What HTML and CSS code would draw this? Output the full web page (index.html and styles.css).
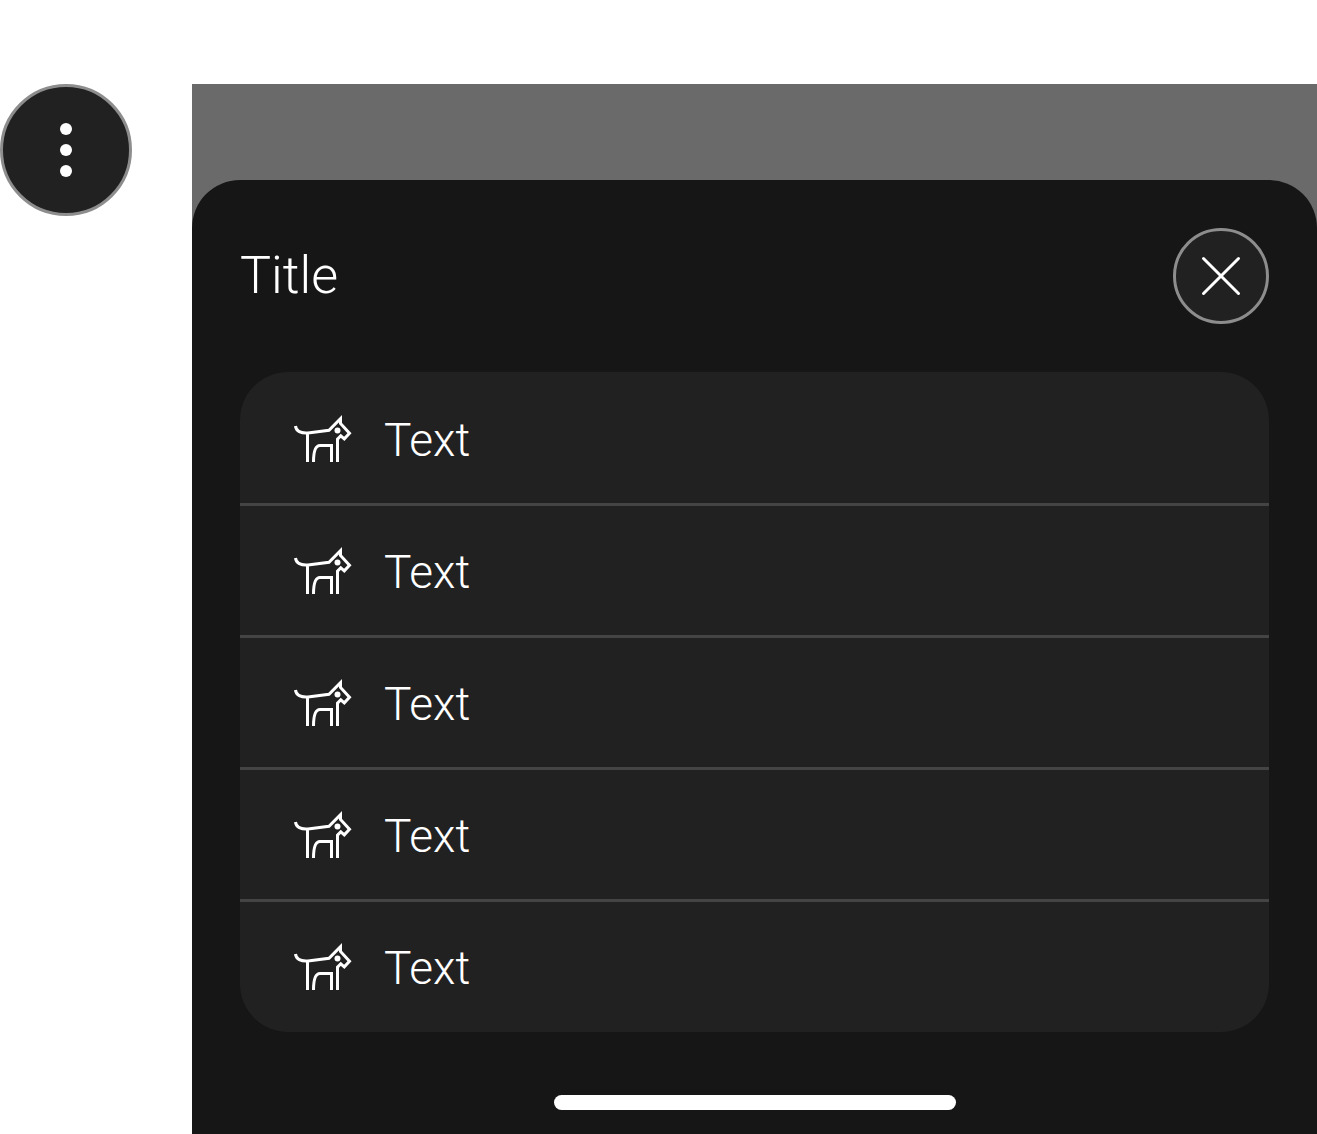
FILE: index.html
```html
<!DOCTYPE html>
<html lang="en">
<head>
<meta charset="utf-8">
<meta name="viewport" content="width=device-width, initial-scale=1">
<title>Title</title>
<link rel="stylesheet" href="styles.css">
</head>
<body>
<svg class="sprite" aria-hidden="true">
  <symbol id="dog" viewBox="0 0 72 72">
    <path d="M7.5 24C8 29 13 31.5 20 31L41 28.3 52.5 16.6V21.5L61.5 31.2 56.3 36.8 52.8 33.8 49.5 37.2V60M19.5 31V60M25.5 60C25.5 50 27 43.5 32 43.5H43.5V60" fill="none" stroke="currentColor" stroke-width="3"/>
    <circle cx="49.5" cy="28.5" r="3" fill="currentColor"/>
  </symbol>
</svg>
<div class="page">
  <button class="round more" type="button" aria-label="More">
    <svg class="more-icon" viewBox="0 0 72 72" aria-hidden="true"><circle cx="36" cy="15" r="6"/><circle cx="36" cy="36" r="6"/><circle cx="36" cy="57" r="6"/></svg>
  </button>
  <main class="scrim">
    <section class="sheet" role="dialog" aria-labelledby="sheet-title">
      <header class="header">
        <h1 class="title" id="sheet-title">Title</h1>
        <button class="round close" type="button" aria-label="Close">
          <svg class="close-icon" viewBox="0 0 48 48" aria-hidden="true"><path d="M6.5 6.5 41.5 41.5M41.5 6.5 6.5 41.5"/></svg>
        </button>
      </header>
      <ul class="menu">
        <li class="item"><button class="action" type="button"><svg class="icon" aria-hidden="true"><use href="#dog"/></svg><span class="label">Text</span></button></li>
        <li class="item"><button class="action" type="button"><svg class="icon" aria-hidden="true"><use href="#dog"/></svg><span class="label">Text</span></button></li>
        <li class="item"><button class="action" type="button"><svg class="icon" aria-hidden="true"><use href="#dog"/></svg><span class="label">Text</span></button></li>
        <li class="item"><button class="action" type="button"><svg class="icon" aria-hidden="true"><use href="#dog"/></svg><span class="label">Text</span></button></li>
        <li class="item"><button class="action" type="button"><svg class="icon" aria-hidden="true"><use href="#dog"/></svg><span class="label">Text</span></button></li>
      </ul>
      <div class="home-bar"></div>
    </section>
  </main>
</div>
</body>
</html>
```
FILE: styles.css
```css
* {
  box-sizing: border-box;
}

body {
  margin: 0;
  background: #fff;
  color: #fff;
  font-family: Roboto, "Liberation Sans", sans-serif;
  font-weight: 300;
}

button {
  margin: 0;
  font: inherit;
  color: inherit;
  cursor: pointer;
}

.sprite {
  display: none;
}

.page {
  display: flex;
  align-items: flex-start;
  gap: 60px;
  padding-top: 84px;
}

.round {
  display: flex;
  flex: none;
  align-items: center;
  justify-content: center;
  padding: 0;
  border: 3px solid #8d8d8d;
  border-radius: 50%;
  background: #212121;
}

.more {
  width: 132px;
  height: 132px;
}

.more-icon {
  width: 72px;
  height: 72px;
  fill: currentColor;
}

.close {
  width: 96px;
  height: 96px;
}

.close-icon {
  width: 48px;
  height: 48px;
  fill: none;
  stroke: currentColor;
  stroke-width: 3;
  stroke-linecap: round;
}

.scrim {
  flex: 1;
  min-width: 0;
  padding-top: 96px;
  background: #6a6a6a;
}

.sheet {
  padding: 48px 48px 24px;
  border-radius: 48px 48px 0 0;
  background: #161616;
}

.header {
  display: flex;
  align-items: center;
  justify-content: space-between;
  margin-bottom: 48px;
}

.title {
  margin: 0;
  font-size: 52px;
  font-weight: 300;
  line-height: 66px;
}

.menu {
  margin: 0;
  padding: 0;
  list-style: none;
  border-radius: 48px;
  background: #212121;
}

/* Divider straddles the edge between two rows */
.item + .item {
  box-shadow: 0 -1px #444, inset 0 2px #444;
}

.action {
  display: flex;
  align-items: center;
  gap: 24px;
  width: 100%;
  padding: 30px 48px;
  border: 0;
  background: none;
  font-size: 46px;
  line-height: 66px;
  text-align: left;
}

.label {
  padding-top: 4px;
}

.icon {
  flex: none;
  width: 72px;
  height: 72px;
}

.home-bar {
  width: 402px;
  max-width: 100%;
  height: 15px;
  margin: 63px auto 0;
  border-radius: 8px;
  background: #fff;
}
```
